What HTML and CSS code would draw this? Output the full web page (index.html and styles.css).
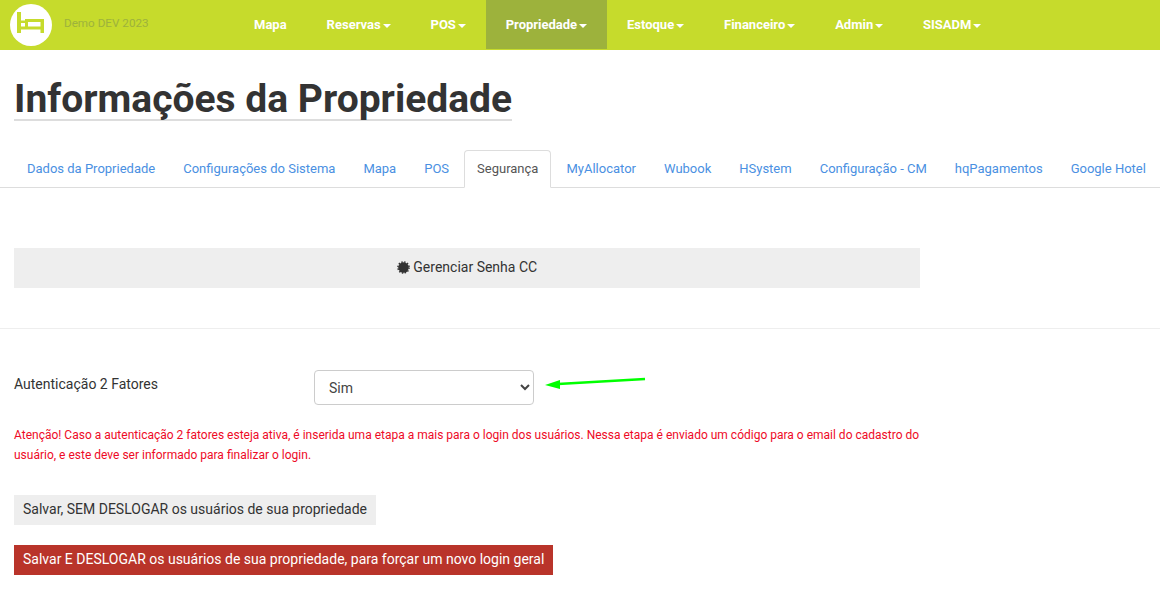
FILE: index.html
```html
<!DOCTYPE html>
<html lang="en">
<head>
    <meta charset="UTF-8">
    <meta name="viewport" content="width=device-width, initial-scale=1.0">
    <title>Informações da Propriedade</title>
    <link rel="stylesheet" href="styles.css">
</head>
<body>
    <div class="top-nav">
        <div class="brand">
            <svg class="brand-logo" width="42" height="42" viewBox="0 0 42 42">
                <circle cx="21" cy="21" r="21" fill="#fff"/>
                <path d="M7 8h4v21H7zM11 16.500h6V19h-6zM15 15h19v3H15zM15 15h3v9h-3zM11 22.500h23v3H11zM30.500 15H34v14h-3.500z" fill="#c6db2c"/>
            </svg>
            <span class="brand-name">Demo DEV 2023</span>
        </div>
        <ul class="nav-menu">
            <li><a>Mapa</a></li>
            <li><a>Reservas<i class="caret"></i></a></li>
            <li><a>POS<i class="caret"></i></a></li>
            <li class="active"><a>Propriedade<i class="caret"></i></a></li>
            <li><a>Estoque<i class="caret"></i></a></li>
            <li><a>Financeiro<i class="caret"></i></a></li>
            <li><a>Admin<i class="caret"></i></a></li>
            <li><a>SISADM<i class="caret"></i></a></li>
        </ul>
    </div>

    <div class="content">
        <h1 class="page-title">Informações da Propriedade</h1>

        <ul class="tabs">
            <li><a>Dados da Propriedade</a></li>
            <li><a>Configurações do Sistema</a></li>
            <li><a>Mapa</a></li>
            <li><a>POS</a></li>
            <li class="active"><a>Segurança</a></li>
            <li><a>MyAllocator</a></li>
            <li><a>Wubook</a></li>
            <li><a>HSystem</a></li>
            <li><a>Configuração - CM</a></li>
            <li><a>hqPagamentos</a></li>
            <li><a>Google Hotel</a></li>
        </ul>

        <a class="btn btn-wide">
            <svg class="cert" width="13" height="13" viewBox="0 0 14 14">
                <circle cx="7" cy="7" r="5.600" fill="#333"/>
                <circle cx="7" cy="7" r="6" fill="none" stroke="#333" stroke-width="1.600" stroke-dasharray="1.570 1.570"/>
            </svg>
            Gerenciar Senha CC
        </a>

        <hr class="divider">

        <div class="form-row">
            <label class="form-label">Autenticação 2 Fatores</label>
            <select class="form-select">
                <option>Sim</option>
                <option>Não</option>
            </select>
            <svg class="arrow" width="104" height="16" viewBox="0 0 104 16">
                <path d="M15 9L102 4" stroke="#0f0" stroke-width="2.500" fill="none"/>
                <path d="M2 10l15-5v9z" fill="#0f0"/>
            </svg>
        </div>

        <p class="warning">Atenção! Caso a autenticação 2 fatores esteja ativa, é inserida uma etapa a mais para o login dos usuários. Nessa etapa é enviado um código para o email do cadastro do usuário, e este deve ser informado para finalizar o login.</p>

        <div class="actions">
            <a class="btn">Salvar, SEM DESLOGAR os usuários de sua propriedade</a>
            <a class="btn btn-danger">Salvar E DESLOGAR os usuários de sua propriedade, para forçar um novo login geral</a>
        </div>
    </div>
</body>
</html>
```

FILE: styles.css
```css
:root {
    --lime: #c6db2c;
    --lime-dark: #9db23c;
    --link-blue: #4a90e2;
    --text-dark: #333;
    --btn-grey: #eee;
}

* {
    box-sizing: border-box;
}

body {
    margin: 0;
    background: #fff;
    color: var(--text-dark);
    font-family: Roboto, sans-serif;
    font-size: 14px;
    overflow: hidden;
}

/* Top bar */
.top-nav {
    display: flex;
    height: 50px;
    background: var(--lime);
}

.brand {
    display: flex;
    align-items: center;
    width: 234px;
    padding-left: 10px;
}

.brand-logo {
    flex: none;
}

.brand-name {
    margin-left: 12px;
    margin-top: -4px;
    font-size: 11.7px;
    color: #9db23c;
}

.nav-menu {
    display: flex;
    margin: 0;
    padding: 0;
    list-style: none;
}

.nav-menu a {
    display: block;
    height: 49px;
    padding: 0 20px;
    color: #fff;
    font-size: 13px;
    font-weight: 700;
    line-height: 50px;
}

.nav-menu .active a {
    background: var(--lime-dark);
}

.caret {
    display: inline-block;
    margin-left: 1.85px;
    vertical-align: middle;
    border-top: 4px solid #fff;
    border-left: 4px solid transparent;
    border-right: 4px solid transparent;
}

/* Page */
.content {
    padding: 0 0 0 14px;
}

.page-title {
    display: inline-block;
    margin: 29px 0 0;
    border-bottom: 2px solid #ddd;
    font-size: 39px;
    font-weight: 700;
    line-height: 40px;
}

/* Tabs */
.tabs {
    display: flex;
    margin: 29px 0 0 -14px;
    padding: 0 0 0 14px;
    list-style: none;
    border-bottom: 1px solid #ddd;
}

.tabs li {
    margin-bottom: -1px;
}

.tabs a {
    display: block;
    height: 38px;
    padding: 0 12px;
    margin-right: 2px;
    border: 1px solid transparent;
    border-radius: 4px 4px 0 0;
    color: var(--link-blue);
    font-size: 13px;
    line-height: 36px;
    white-space: nowrap;
}

.tabs .active a {
    border-color: #ddd;
    border-bottom-color: #fff;
    background: #fff;
    color: #555;
}

/* Buttons */
.btn {
    display: inline-block;
    padding: 0 9px;
    height: 30px;
    background: var(--btn-grey);
    color: var(--text-dark);
    font-size: 14px;
    line-height: 29px;
}

.btn-wide {
    display: block;
    width: 906px;
    height: 40px;
    margin-top: 60px;
    line-height: 38px;
    text-align: center;
}

.cert {
    vertical-align: -2px;
}

.btn-danger {
    background: #b9342a;
    color: #fff;
}

.divider {
    margin: 40px 0 0 -14px;
    border: 0;
    border-top: 1px solid #eee;
}

/* Form */
.form-row {
    display: flex;
    align-items: flex-start;
    margin-top: 41px;
}

.form-label {
    width: 300px;
    padding-top: 6px;
    font-size: 14px;
    line-height: 16px;
}

.form-select {
    width: 220px;
    height: 35px;
    padding: 0 10px;
    border: 1px solid #ccc;
    border-radius: 4px;
    background: #fff;
    color: #444;
    font-family: inherit;
    font-size: 14px;
}

.arrow {
    margin-left: 9px;
    margin-top: 5px;
}

.warning {
    width: 920px;
    margin: 20px 0 0;
    color: #ee0a26;
    font-size: 12px;
    line-height: 20px;
}

.actions {
    display: flex;
    flex-direction: column;
    align-items: flex-start;
    gap: 20px;
    margin-top: 30px;
}
```
